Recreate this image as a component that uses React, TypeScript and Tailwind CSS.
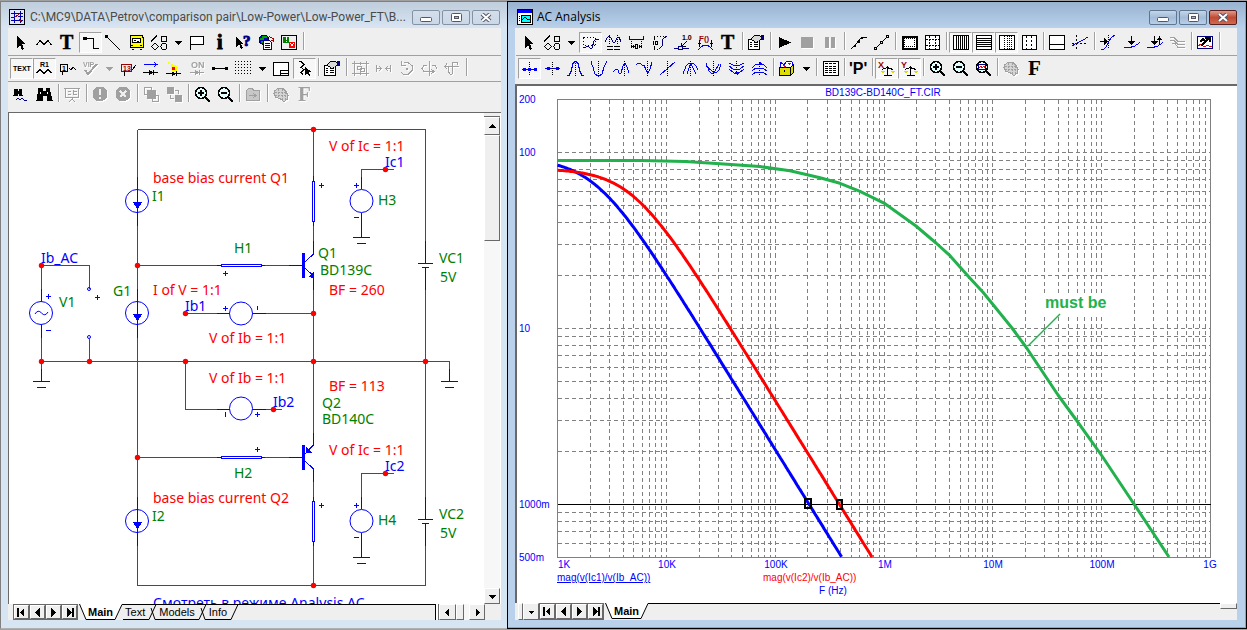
import type { ReactNode } from "react";

const serif = "font-['Liberation_Serif',serif] font-bold";
const sans = "font-['Liberation_Sans',sans-serif] font-bold";

// every icon is drawn on a 17x17 grid
const icons: Record<string, ReactNode> = {
  select: <path d="M4 2v12l3-3 2 5 2-1-2-5h4z" fill="#000" stroke="none" />,
  component: <path d="M0 10.5h1l3-4 4 4 4-4 3 4h1" />,
  text: (
    <text x="1" y="15" fontSize="20" fill="#000" stroke="#000" strokeWidth=".5" className={serif}>
      T
    </text>
  ),
  wire: (
    <>
      <path d="M1 3h4v3H1z" fill="#000" stroke="none" />
      <path d="M4 4.5h7.5v10H17" />
    </>
  ),
  diagonal: (
    <>
      <path d="M0 1h3v3H0z" fill="#000" stroke="none" />
      <path d="M2 3l13 13" />
    </>
  ),
  bus: (
    <>
      <path d="M3 1.5h11l1 2v10H2v-10z" fill="#ff0" />
      <path d="M4.5 4.5h8v4h-8z" fill="#fff" />
      <path d="M6 6.5h2M9 7.5h2M3 11.5h2M12 11.5h2M3.500 15.5h2M11.5 15.5h2" />
    </>
  ),
  shapes: (
    <>
      <path d="M0 7.5l6-6M10.5 2.5h5v5h-5zM4 9l3.5 3.5L4 16 .5 12.5z" />
      <circle cx="13" cy="12.5" r="3" />
    </>
  ),
  flag: <path d="M1.5 16V2.5h13v8h-13" fill="#fff" />,
  info: (
    <text x="5" y="15" fontSize="20" fill="#000" stroke="#000" className={serif}>
      i
    </text>
  ),
  help: (
    <>
      <path d="M1 3v10l3-3 2 5 2-1-2-4h3z" fill="#000" stroke="none" />
      <text x="8" y="12" fontSize="15" fill="#000080" stroke="#000080" className={serif}>
        ?
      </text>
    </>
  ),
  web: (
    <>
      <circle cx="6" cy="6" r="5" fill="#0000c0" stroke="#000" strokeDasharray="2 2" />
      <path d="M2 5h4M4 3h5M3 8h2" stroke="#00a000" strokeWidth="2" />
      <path d="M11 2.5l4 2v3M13 6h3" stroke="#900" />
      <path d="M5.5 6.5h6l2 2v7h-8z" fill="#fff" stroke="#000080" />
      <path d="M7 9.5h5M7 11.5h5M7 13.5h5" stroke="#000080" />
    </>
  ),
  errors: (
    <>
      <path d="M.5 1.5h15v14H.5z" />
      <circle cx="5" cy="6" r="3.5" fill="#008000" stroke="none" />
      <circle cx="11" cy="11" r="3.5" fill="#f00" stroke="none" />
      <path d="M5.5 3v3M5.5 7v1M9.5 9.5l3 3M12.5 9.5l-3 3" stroke="#fff" />
    </>
  ),
  attrText: (
    <text x="0" y="11" fontSize="7" fill="#000" stroke="none" className={sans}>
      TEXT
    </text>
  ),
  partNames: (
    <>
      <text x="4" y="7" fontSize="7" fill="#000" stroke="none" className={sans}>
        R1
      </text>
      <path d="M0 12.5h1l3-3 4 4 4-4 3 3h1" />
    </>
  ),
  nodes: (
    <>
      <path d="M1.5 4.5h7v7h-7zM3.5 11v4M10 8l2 2 2-3 3 3" />
      <text x="3" y="11" fontSize="7" fill="#000" stroke="none" className={sans}>
        1
      </text>
    </>
  ),
  vip: (
    <>
      <text x="1" y="7" fontSize="7" fill="#a0a0a0" stroke="none" className={sans}>
        VIP
      </text>
      <path d="M3 10l3 4 9-10" strokeWidth="2" />
    </>
  ),
  pins: (
    <>
      <path d="M1.5 4.5h10v7h-10z" stroke="#900" />
      <path d="M4.5 11v5M12 10l4-5" />
      <text x="3" y="11" fontSize="7" fill="#900" stroke="none" className={sans}>
        13
      </text>
    </>
  ),
  currents: (
    <>
      <path d="M1 4.5h12M11 2.5l3 2-3 2" stroke="#00f" />
      <path d="M0 12.5h15M6 10v5l3-2.5zM10.5 10v5" />
    </>
  ),
  power: (
    <>
      <path d="M2 2h2v2H2zM5 4h2v1h3l2 3-2 4H6L5 8z" fill="#ff0" stroke="none" />
      <path d="M6 7h3v3H6z" fill="#f00" stroke="none" />
      <path d="M0 13.5h15M6 12v4l3-2.5zM10.5 11v5" />
    </>
  ),
  conditions: (
    <>
      <text x="2" y="8" fontSize="9" fill="#a0a0a0" stroke="none" className={sans}>
        ON
      </text>
      <path d="M1 12.5h14M6 10v5l3-2.5zM10.5 10v5" />
    </>
  ),
  pinConnect: (
    <>
      <path d="M0 7h3v3H0zM13 7h3v3h-3z" fill="#000" stroke="none" />
      <path d="M3 8.5h10" />
    </>
  ),
  grid: <path d="M0 1.5h17M0 4.5h17M0 7.5h17M0 10.5h17M0 13.5h17" strokeDasharray="1 2" />,
  border: <path d="M.5 2.5h15v13H.5zM7.5 10.5h8v5h-8zM7.5 13.5h8" fill="#fff" />,
  mouse: (
    <>
      <path d="M3 1.5h2l3 3-3 3 3 2-3 3 2 2" />
      <path d="M9 7v8l2-2 2 3 1-1-1-3h3z" fill="#000" stroke="none" />
    </>
  ),
  properties: (
    <>
      <path d="M.5 5.5h11v10H.5z" fill="#fff" />
      <path d="M2 8.5h2M6 8.5h4M2 10.5h2M6 10.5h4M2 12.5h2M6 12.5h4" />
      <path d="M2.5 5.5l4-4h5l3 2-4 4-3 1-2-2z" fill="#d8d8d8" />
      <path d="M13 1h3v5h-3z" fill="#000080" stroke="none" />
    </>
  ),
  group: (
    <path d="M2.5 3.5h12v10h-12zM5.5 6.5h4v3h-4zM8.5 8.5h4v3h-4zM0 3.5h2M15 3.5h2M0 13.5h2M15 13.5h2M2.5 1v2M14.5 1v2M2.5 14v2M14.5 14v2M8.5 2v3M8.5 12v3" />
  ),
  mirror: <path d="M1.5 5v7M1 8.5h5M4 6l2.500 2.500L4 11M15.500 5v7M16 8.5h-5M13 6l-2.500 2.500L13 11" />,
  rotate: <path d="M6 2.5h4l4 3v5l-4 4H6l-3-2M3.500 1v4h4M8 8h1v1H8z" />,
  flipX: <path d="M8.5 1v15M6 5.5H3l-2 3 2 3h9M10 9l3 2.5-3 2.5M11 5.5h3l2 3" />,
  flipY: <path d="M1 6.5h14M3 3.500L1 6.5 3 9M8.500 14V3l2-1h3v3M4 7v4l2 3h2" />,
  find: (
    <>
      <path d="M2 3h2v2h2V3h2l1 6H6V7H4v2H1z" fill="#000" />
      <path d="M3 14l2-2 2 2 2-2 2 2h3" stroke="#000080" />
    </>
  ),
  findNext: (
    <>
      <path d="M3 2h3v3h4V2h3l3 12h-5V9H6v5H1z" fill="#000" />
      <path d="M4.500 6v2M11.500 6v2" stroke="#fff" />
    </>
  ),
  stepping: (
    <path d="M0 2.5h16M1.5 2.5v9h13v-9M8.5 11v3M5 15.5l3-2 3 2M4 5.5h3M9.5 4v5M9 5.5h4M4 8.5h3M9 8.5h4" />
  ),
  warn: (
    <>
      <circle cx="8" cy="8" r="7.5" fill="#a0a0a0" stroke="none" />
      <path d="M8 3v6M8 11v2" stroke="#efefef" strokeWidth="2" />
    </>
  ),
  stopError: (
    <>
      <circle cx="8" cy="8" r="7.5" fill="#a0a0a0" stroke="none" />
      <path d="M5 5l6 6M11 5l-6 6" stroke="#efefef" strokeWidth="2" />
    </>
  ),
  toFront: (
    <>
      <path d="M1.500 1.500h7v7h-7zM9.500 9.500h6v6h-6z" />
      <path d="M4 4h9v9H4z" fill="#a0a0a0" stroke="none" />
    </>
  ),
  toBack: (
    <>
      <path d="M1 1h7v7H1zM9 9h7v7H9z" fill="#a0a0a0" stroke="none" />
      <path d="M9 4.500h3.500V8M4.500 9v3.500H8" />
    </>
  ),
  zoomIn: (
    <>
      <circle cx="7" cy="7" r="5.5" fill="#e0ffff" strokeWidth="1.5" />
      <path d="M7 4v6M4 7h6M11 11l5 5" strokeWidth="2" />
    </>
  ),
  zoomOut: (
    <>
      <circle cx="7" cy="7" r="5.5" fill="#e0ffff" strokeWidth="1.5" />
      <path d="M4 7h6M11 11l5 5" strokeWidth="2" />
    </>
  ),
  zoomFit: (
    <>
      <circle cx="7" cy="7" r="5.5" fill="#e0ffff" strokeWidth="1.5" />
      <path d="M3.5 4.5h7v5h-7z" fill="#fff" stroke="#000080" />
      <path d="M4 8l2-2 1 2 2-2 1 2" stroke="#f00" />
      <path d="M11 11l5 5" strokeWidth="2" />
    </>
  ),
  folder: (
    <>
      <path d="M1.5 4.5l2-2h4l1 2h6v10h-13z" fill="#c8c8c8" />
      <path d="M4 9.5h6M8 7l3 2.5L8 12" />
    </>
  ),
  color: (
    <>
      <path d="M5 2.5h5l3 3 2 4-1 4-3 2-4-3-4-1-2-4 1-3z" fill="#d4d4d4" />
      <path d="M2 6.5h11M2 9.5h12M5.5 3v9M9.5 3v11M12.5 6v8" strokeDasharray="2 1" />
    </>
  ),
  fontDim: (
    <text x="2" y="15" fontSize="21" fill="#a0a0a0" stroke="none" className={serif}>
      F
    </text>
  ),
  font: (
    <text x="2" y="15" fontSize="21" fill="#000" stroke="none" className={serif}>
      F
    </text>
  ),
  scale: (
    <>
      <path d="M1.5 3.5h12v8h-12z" strokeDasharray="1 2" />
      <path d="M1 14l3-1 2-1 2 2h2l2-7 2-2h3" stroke="#000080" />
    </>
  ),
  cursors: (
    <>
      <path d="M0 8l2-4 2-2 2 2 2 4h2l2-4 2-1 2 5" stroke="#000080" />
      <path d="M4.5 1v9M12.5 1v9" strokeDasharray="1 1" />
      <path d="M2 12.5h6M9 12.5h6M2 15.5h6M9 15.5h6" />
    </>
  ),
  tagH: (
    <>
      <path d="M1 5.500h15M1.500 2v4M15.500 2v4" stroke="#000080" />
      <path d="M3.5 7v8M13.5 7v8" strokeDasharray="1 1" />
      <path d="M3 12.5h4M11 12.5h3M5.500 11v3M11.500 11v3M7.500 10.500h2v4h-2z" />
    </>
  ),
  tagV: (
    <>
      <path d="M3 2.5h11M3 15.5h6" strokeDasharray="1 2" />
      <path d="M8 15l3-3 1-7 4-3" stroke="#000080" />
      <path d="M3.5 3v3M3.5 12v3M2.500 7v4M4.500 7.5h2v3h-2z" />
    </>
  ),
  tagPoint: (
    <>
      <text x="8" y="6" fontSize="7" fill="#000" stroke="none" className={sans}>
        1.0
      </text>
      <path d="M13 7l-5 5M7.500 9v3.500h4" />
      <path d="M0 14.5h4M4.500 12.5h4v3h-4zM9 14.5h6" stroke="#000080" />
    </>
  ),
  perf: (
    <>
      <text x="2" y="7" fontSize="8" fill="#900" stroke="none" className={sans}>
        F()
      </text>
      <path d="M1 16l3-3 3-2h3l3 2 3 3" stroke="#00f" />
      <path d="M2.5 6v7M1 9.500h3M14.5 6v7M13 9.500h3" />
    </>
  ),
  run: <path d="M3 3v11l12-5.5z" fill="#000" stroke="none" />,
  stop: <path d="M2 3h12v11H2z" fill="#a0a0a0" stroke="none" />,
  pause: <path d="M3 3h4v11H3zM9 3h4v11H9z" fill="#a0a0a0" stroke="none" />,
  dataPoints: (
    <>
      <path d="M1 15l5-5 5-6 2-1h4" />
      <path d="M4 11h2v2H4zM8 7h2v2H8zM11 3h2v2h-2z" fill="#000" stroke="none" />
    </>
  ),
  tokens: <path d="M1.500 13.500h2v2h-2zM7.500 7.500h2v2h-2zM13.500 1.500h2v2h-2zM4 13l3-3M10 7l3-3" />,
  ruler: (
    <>
      <path d="M1.5 2.5h14v12h-14z" strokeWidth="2" fill="#fff" />
      <path d="M3 4.5h11M3 12.5h11M3.5 4v9M13.5 4v9" strokeDasharray="1 1" />
    </>
  ),
  plus: (
    <>
      <path d="M1.5 1.5h14v14h-14z" fill="#fff" />
      <path d="M2 5.5h13M2 11.5h13M5.5 2v13M11.5 2v13" strokeDasharray="2 1" />
    </>
  ),
  gridX: (
    <path d="M1.5 1.5h15v14h-15zM4.5 2v13M6.5 2v13M8.5 2v13M10.5 2v13M12.5 2v13M14.5 2v13" fill="#fff" />
  ),
  gridY: (
    <path d="M1.5 1.5h15v14h-15zM2 4.5h14M2 6.5h14M2 8.5h14M2 10.5h14M2 12.5h14" fill="#fff" />
  ),
  minorX: (
    <>
      <path d="M1.5 1.5h15v14h-15z" fill="#fff" />
      <path d="M6.5 2v13M9.5 2v13M11.5 2v13M13.5 2v13" strokeDasharray="1 1" />
    </>
  ),
  minorY: (
    <>
      <path d="M1.5 1.5h14v14h-14z" fill="#fff" />
      <path d="M5.5 2v13M10.5 2v13" strokeDasharray="2 2" />
    </>
  ),
  baseline: <path d="M.5 1.5h15v14H.5zM1 10.5h14" fill="#fff" />,
  horizontal: (
    <>
      <path d="M4.5 1v15M0 9.5h15" strokeDasharray="2 2" />
      <path d="M0 12l5-3 6-3 5-3" stroke="#00f" />
    </>
  ),
  goX: (
    <>
      <path d="M1 15h3l2-2 3-6 2-3 4-3" stroke="#00f" />
      <path d="M0 7.5h6" />
      <path d="M4 4v7l4-3.500z" fill="#000" stroke="none" />
      <path d="M8.5 1v14" strokeDasharray="1 1" />
    </>
  ),
  goY: (
    <>
      <path d="M1 13.5h5l5-1 3-2 3-2" stroke="#00f" />
      <path d="M8.5 2v7" />
      <path d="M5 7h7l-3.500 4z" fill="#000" stroke="none" />
    </>
  ),
  goPerf: (
    <>
      <path d="M1 13.5h5l5-1 3-2 3-2" stroke="#00f" />
      <path d="M8.5 2v7M13.5 2v9" />
      <path d="M5 7h7l-3.500 4zM11 6h5l-2.500-3z" fill="#000" stroke="none" />
    </>
  ),
  branch: <path d="M1 3.5h4l4 4h7M1 6.5h4l4 4h7M3 9.5h3l3 4h7" />,
  monte: (
    <>
      <path d="M.5 2.5h15v12H.5z" fill="#fff" stroke="#000080" />
      <path d="M1 12l3-2 3 3 4-2 2 2 2-1" stroke="#f00" />
      <path d="M3 8l3-3 2 2M4 12l8-8M8 4h5v4" strokeWidth="1.500" />
    </>
  ),
  next: (
    <>
      <path d="M1 9.5h15" stroke="#00f" />
      <path d="M2 8h3v3H2zM7 8h3v3H7zM13 8h3v3h-3z" fill="#00f" stroke="none" />
      <path d="M8.5 2v14" strokeDasharray="1 1" />
    </>
  ),
  interpolate: (
    <>
      <path d="M1 8.5h15" stroke="#00f" />
      <path d="M3 7h3v3H3zM12 7h3v3h-3z" fill="#00f" stroke="none" />
      <path d="M8.5 2v14" strokeDasharray="1 1" />
    </>
  ),
  peak: (
    <>
      <path d="M0 15.5h2l2-4 2-8 2-2h1l2 2 2 8 2 4h2" stroke="#00f" />
      <path d="M8.5 1v15" strokeDasharray="1 1" />
    </>
  ),
  valley: (
    <>
      <path d="M1 1v2l2 4 2 7 3 2h1l3-2 2-7 2-4V1" stroke="#00f" />
      <path d="M8.5 1v15" strokeDasharray="1 1" />
    </>
  ),
  high: (
    <>
      <path d="M0 12l3-3 2 1 1 3h2l2-7 2-3 2 4 2 6" stroke="#00f" />
      <path d="M11.5 1v15" strokeDasharray="1 1" />
    </>
  ),
  low: (
    <>
      <path d="M0 5l2-2h2l2 2h2l2 5 2 3 2-4 2-7" stroke="#00f" />
      <path d="M11.5 1v15" strokeDasharray="1 1" />
    </>
  ),
  inflection: (
    <>
      <path d="M1 15L16 2" stroke="#00f" />
      <path d="M8.5 1v15" strokeDasharray="1 1" />
    </>
  ),
  globalHigh: (
    <>
      <path d="M1 14l3-8 3-3 3 3 4 8M5 14l3-9 3-2 3 3 2 4" stroke="#00f" />
      <path d="M8.5 1v15" strokeDasharray="1 1" />
    </>
  ),
  globalLow: (
    <>
      <path d="M1 3l3 8 3 3 3-3 4-7M1 6l6 5 4 2 3-3 2-6" stroke="#00f" />
      <path d="M8.5 1v15" strokeDasharray="1 1" />
    </>
  ),
  bottom: (
    <>
      <path d="M1 3l4 2h7l4-2M1 6l4 3h7l4-3M1 9l5 4h5l5-4" stroke="#00f" />
      <path d="M6 12h6l-3 3z" fill="#00f" stroke="none" />
      <path d="M8.5 1v14" strokeDasharray="1 1" />
    </>
  ),
  top: (
    <>
      <path d="M1 15l4-3h7l4 3M1 11l4-3h7l4 3M1 8l4-4h7l4 4" stroke="#00f" />
      <path d="M6 5h6L9 2z" fill="#00f" stroke="none" />
      <path d="M8.5 2v14" strokeDasharray="1 1" />
    </>
  ),
  animate: (
    <>
      <path d="M1 2l4 3 3-4 5 1v5H1z" fill="#fff" stroke="#00f" />
      <path d="M9 3h3M10 5l2-2M4 5l3 2" stroke="#f00" />
      <path d="M.5 7.5h11v8H.5zM11.5 7.5l3-3v8l-3 3z" fill="#dd0" />
      <path d="M5.500 10v2" />
    </>
  ),
  numeric: (
    <>
      <path d="M1.5 1.5h15v14h-15z" fill="#fff" />
      <path d="M3 3.5h12M3 6.5h12M3 8.5h12M3 10.5h12M3 12.5h12" strokeDasharray="3 1" />
    </>
  ),
  probe: (
    <text x="-1" y="14" fontSize="16" fill="#000" stroke="none" className={sans}>
      'P'
    </text>
  ),
  balanceX: (
    <>
      <text x="0" y="8" fontSize="9" fill="#900" stroke="none" className={sans}>
        X
      </text>
      <path d="M9.500 6v9M6 15.5h8M4 9.500l5-2 6 2" />
      <path d="M2 11h5l-2 3zM12 11h5l-2 3z" fill="#dd0" stroke="none" />
    </>
  ),
  balanceY: (
    <>
      <text x="0" y="8" fontSize="9" fill="#900" stroke="none" className={sans}>
        Y
      </text>
      <path d="M9.500 6v9M6 15.5h8M4 9.500l5-2 6 2" />
      <path d="M2 11h5l-2 3zM12 11h5l-2 3z" fill="#dd0" stroke="none" />
    </>
  ),
};

const disabled = [
  "vip", "conditions", "group", "mirror", "rotate", "flipX", "flipY", "stepping", "warn", "stopError",
  "toFront", "toBack", "folder", "color", "fontDim", "stop", "pause", "branch",
];
const pressed = [
  "wire", "attrText", "partNames", "mouse", "scale", "gridX", "gridY", "minorX", "next", "balanceX", "balanceY",
];

const editBar =
  "select component text wire diagonal bus shapes v flag info help web errors |";
const viewBar =
  "attrText partNames nodes vip V pins currents power conditions pinConnect grid v border mouse | properties | group mirror rotate flipX flipY |";
const findBar =
  "find findNext | stepping | warn stopError | toFront toBack | zoomIn zoomOut | folder | color fontDim";
const analysisBar =
  "select shapes v scale cursors tagH tagV tagPoint perf text | properties | run stop pause | dataPoints tokens | ruler plus | gridX gridY minorX minorY | baseline horizontal | goX goY goPerf branch | monte |";
const cursorBar =
  "next interpolate peak valley high low inflection globalHigh globalLow bottom top | animate v | numeric | probe | balanceX balanceY | zoomIn zoomOut zoomFit | color font";

function Toolbar({ items }: { items: string }) {
  return (
    <div className="flex pl-0.5">
      {items.split(" ").map((name, i) => {
        if (name === "|") {
          return (
            <div key={i} className="w-[5px] h-[18px] pl-0.5">
              <div className="w-0.5 h-full bg-[#a0a0a0] border-r border-white" />
            </div>
          );
        }

        if (name === "v" || name === "V") {
          return (
            <button
              key={i}
              aria-label="More"
              className={
                "w-[15px] h-[21px] flex items-center justify-center " +
                (name === "V" ? "text-[#a0a0a0]" : "text-black")
              }
            >
              <svg width="7" height="4" fill="currentColor" shapeRendering="crispEdges">
                <path d="M0 0h7L3.5 4z" />
              </svg>
            </button>
          );
        }

        const off = disabled.includes(name);

        return (
          <button
            key={i}
            aria-label={name}
            disabled={off}
            className={
              "w-[23px] h-[21px] shrink-0 border flex items-center justify-center " +
              (pressed.includes(name)
                ? "bg-[#f7f7f7] border-t-[#a0a0a0] border-l-[#a0a0a0] border-r-white border-b-white"
                : "border-transparent")
            }
          >
            <svg
              width="17"
              height="17"
              viewBox="0 0 17 17"
              fill="none"
              stroke={off ? "#a0a0a0" : "#000"}
              shapeRendering="crispEdges"
              className={off ? "drop-shadow-[1px_1px_0_#fff] overflow-visible" : "overflow-visible"}
            >
              {icons[name]}
            </svg>
          </button>
        );
      })}
    </div>
  );
}

function WindowButtons({ active }: { active?: boolean }) {
  const base = "w-7 h-[15px] border rounded-xs flex items-center justify-center ";
  const normal = active
    ? "border-[#5f7690] bg-linear-to-b from-[#c4d6e9] via-[#a3bcd8] to-[#b8cfe8]"
    : "border-[#8492a3] bg-linear-to-b from-[#d3deea] to-[#cbd8e7]";

  return (
    <div className="flex gap-0.5">
      <button aria-label="Minimize" className={base + normal}>
        <svg width="12" height="9" fill="#fff" stroke="#535666">
          <rect x=".5" y="4.5" width="11" height="4" rx="1" />
        </svg>
      </button>
      <button aria-label="Restore" className={base + normal}>
        <svg width="11" height="9" fill="#fff" stroke="#535666">
          <rect x=".5" y=".5" width="10" height="8" rx="1" />
          <rect x="3.5" y="3.5" width="4" height="2" fill="#a3bcd8" />
        </svg>
      </button>
      <button
        aria-label="Close"
        className={
          base + (active ? "border-[#5b1f1c] bg-linear-to-b from-[#dd9a8c] via-[#c04a33] to-[#cf6a50]" : normal)
        }
      >
        <svg width="12" height="9" fill="none">
          <path d="M2 1l8 7M10 1L2 8" stroke="#535666" strokeWidth="4" />
          <path d="M2 1l8 7M10 1L2 8" stroke="#fff" strokeWidth="2" />
        </svg>
      </button>
    </div>
  );
}

const box =
  "bg-[#efefef] border border-t-white border-l-white border-r-[#696969] border-b-[#696969] flex items-center justify-center shrink-0 ";

function Arrow({ label, d, className }: { label: string; d: string; className: string }) {
  return (
    <button aria-label={label} className={box + className}>
      <svg width="9" height="9" viewBox="0 0 9 9" shapeRendering="crispEdges">
        <path d={d} />
      </svg>
    </button>
  );
}

function SheetNav() {
  return (
    <div className="flex bg-[#696969] gap-px p-px">
      <Arrow label="First sheet" className="w-[15px]" d="M0 0h2v9H0zM7 0v9L2.500 4.500z" />
      <Arrow label="Previous sheet" className="w-[15px]" d="M7 0v9L2 4.500z" />
      <Arrow label="Next sheet" className="w-[15px]" d="M2 0v9l5-4.500z" />
      <Arrow label="Last sheet" className="w-[15px]" d="M2 0v9l4.500-4.500zM7 0h2v9H7z" />
    </div>
  );
}

// slanted edge between two sheet tabs
function Slant({ d, fillPath }: { d: string; fillPath?: string }) {
  return (
    <svg width="10" height="16" className="shrink-0" fill="none" stroke="#000">
      {fillPath && <path d={fillPath} fill="#fff" stroke="none" />}
      <path d={d} />
    </svg>
  );
}

type P = [number, number];

function Schematic() {
  const dots: P[] = [
    [313.5, 129.5], [385.5, 169.5], [41.5, 265.5], [137.5, 265.5], [185.5, 313.5], [313.5, 313.5],
    [41.5, 361.5], [89.5, 361.5], [185.5, 361.5], [313.5, 361.5], [425.5, 361.5], [273.5, 409.5],
    [137.5, 457.5], [385.5, 473.5], [313.5, 585.5],
  ];
  const circles: P[] = [
    [137, 201], [137, 313], [137, 521], [41, 313], [241, 313.5], [241, 408.5], [361.5, 201], [361.5, 521],
  ];
  const plus: P[] = [
    [48.5, 296.5], [97.5, 297.5], [225.5, 273.5], [225.5, 308.5], [321.5, 185.5], [356.5, 185.5],
    [257.5, 414.5], [257.5, 449.5], [321.5, 505.5], [356.5, 505.5],
  ];
  const names: [number, number, string][] = [
    [152, 201, "I1"], [59, 307, "V1"], [113, 296, "G1"], [234, 253, "H1"], [378, 205, "H3"],
    [318, 258, "Q1"], [320, 275, "BD139C"], [439, 263, "VC1"], [440, 282, "5V"], [234, 478, "H2"],
    [152, 521, "I2"], [322, 408, "Q2"], [322, 424, "BD140C"], [378, 525, "H4"], [439, 519, "VC2"],
    [440, 538, "5V"],
  ];
  const notes: [number, number, string][] = [
    [153, 183, "base bias current Q1"], [329, 151, "V of Ic = 1:1"], [153, 295, "I of V = 1:1"],
    [209, 343, "V of Ib = 1:1"], [329, 295, "BF = 260"], [209, 383, "V of Ib = 1:1"],
    [329, 391, "BF = 113"], [329, 455, "V of Ic = 1:1"], [153, 503, "base bias current Q2"],
  ];
  const nets: [number, number, string][] = [
    [41, 263, "Ib_AC"], [185, 311, "Ib1"], [385, 167, "Ic1"], [273, 407, "Ib2"], [385, 471, "Ic2"],
    [153, 608, "Смотреть в режиме Analysis AC"],
  ];

  return (
    <svg
      viewBox="9 113 475 491"
      preserveAspectRatio="xMinYMin meet"
      className="absolute inset-0 w-full h-full font-['Noto_Sans',sans-serif] text-[14px]"
      role="img"
      aria-label="Schematic"
    >
      <g fill="none" shapeRendering="crispEdges">
        <path
          stroke="#008000"
          d="M137.5 129.500H425.500V585.500H137.500V129.500M137 265.500H289M137 457.500H289M41.500 361V265.500H89.500V289M89.500 339V362M41 361.500H449.500V369M41.500 361V369M185 313.500H313M185.500 361V409.500H282M313.500 129V586M361.500 177V169.500H394M361.500 497V473.500H394"
        />
        <path
          stroke="#fff"
          strokeWidth="3"
          d="M137.500 190V212M137.500 302V324M137.500 510V532M41.500 302V325M230 313.500H252M230 409.500H252M313.500 182V221M313.500 502V541M222 265.500H261M222 457.500H261M313.500 255V276M313.500 446V468M425.500 264V267M425.500 520V523"
        />
        <path
          stroke="#00f"
          d="M137.500 177V226M137.500 289V338M137.500 497V546M41.500 289V301M41.500 325V338M217 313.500H229M253 313.500H266M217 409.500H229M253 409.500H266M217 265.500H221M262 265.500H265M217 457.500H221M262 457.500H265M221.500 264.500H261.500V266.500H221.500ZM221.500 456.500H261.500V458.500H221.500ZM313.500 176V181M313.500 222V226M312.500 181.500H314.500V221.500H312.500ZM313.500 497V501M313.500 542V546M312.500 501.500H314.500V541.500H312.500ZM289 265.500H302M289 457.500H302M313.500 241V254L305 262M305 268L313.500 276V290M313.500 433V445L305 454M305 461L313.500 469V482M361.500 177V189M361.500 213V237M353 237.500H370M357 243.500H366M361.500 497V509M361.500 533V557M353 557.500H370M357 563.500H366M425.500 241V263M418 263.500H433M422 267.500H429M425.500 267V290M425.500 497V519M418 519.500H433M422 523.500H429M425.500 523V546M41.500 369V381M33 381.500H50M37 387.500H46M449.500 369V381M441 381.500H458M445 387.500H454M46 330.500H51M354 217.500H359M354 537.500H359M257.500 306V310M225.500 412V417"
        />
        <path
          stroke="none"
          fill="#00f"
          d="M133 202H142L137.500 210ZM133 314H142L137.500 322ZM133 522H142L137.500 530ZM302 253H305V278H302ZM302 445H305V470H302ZM314 271V278L308 277ZM306 447V453H312Z"
        />
        {plus.map(([x, y]) => (
          <path key={x + "," + y} stroke="#00f" d={`M${x - 2.5} ${y}h5M${x} ${y - 2.5}v5`} />
        ))}
      </g>
      <g fill="none" stroke="#00f">
        {circles.map(([x, y]) => (
          <circle key={x + "," + y} cx={x} cy={y} r="11.500" />
        ))}
        <circle cx="89" cy="289" r="1.500" />
        <circle cx="89" cy="337" r="1.500" />
        <path d="M35 314q3-5 6.500-1t6.500-1" />
      </g>
      {dots.map(([x, y]) => (
        <circle key={x + "," + y} cx={x} cy={y} r="2.700" fill="#f00" />
      ))}
      <g fill="#008000">
        {names.map(([x, y, t]) => (
          <text key={t + y} x={x} y={y}>{t}</text>
        ))}
      </g>
      <g fill="#f00">
        {notes.map(([x, y, t]) => (
          <text key={t + y} x={x} y={y}>{t}</text>
        ))}
      </g>
      <g fill="#00f">
        {nets.map(([x, y, t]) => (
          <text key={t} x={x} y={y}>{t}</text>
        ))}
      </g>
    </svg>
  );
}

const left = 557.5;
const right = 1210.5;
const topY = 99.5;
const bottomY = 557.5;
const xAt = (f: number) => left + ((right - left) / 6) * (Math.log10(f) - 3);
const yAt = (g: number) => bottomY - 176 * Math.log10(g / 0.5);

// single pole roll-off sampled across the sweep
function rollOff(gain: number, pole: number) {
  const points: string[] = [];

  for (let e = 3; e < 6.2; e += 0.01) {
    const f = 10 ** e;
    const g = gain / Math.sqrt(1 + (f / pole) ** 2);
    if (g < 0.495) break;
    points.push(`${xAt(f).toFixed(1)},${yAt(g).toFixed(1)}`);
  }

  return points.join(" ");
}

function Plot() {
  const cols: number[] = [];
  for (let d = 3; d < 9; d++) {
    for (let n = 1; n < 10; n++) cols.push(n * 10 ** d);
  }
  const rows = [0.6, 0.7, 0.8, 0.9];
  for (let n = 2; n <= 10; n++) rows.push(n);
  for (let n = 2; n <= 10; n++) rows.push(n * 10);

  const xLabels: [string, number][] = [
    ["1K", 564], ["10K", 667], ["100K", 776], ["1M", 885], ["10M", 993], ["100M", 1102], ["1G", 1210],
  ];
  const yLabels: [string, number][] = [
    ["200", 103], ["100", 156], ["10", 332], ["1000m", 508], ["500m", 561],
  ];

  return (
    <svg
      viewBox="517 86 720 517"
      preserveAspectRatio="xMinYMin meet"
      className="absolute inset-0 w-full h-full font-['Liberation_Sans',sans-serif] text-[10px]"
      role="img"
      aria-label="AC analysis plot"
    >
      <g stroke="#808080" fill="none" shapeRendering="crispEdges">
        {cols.slice(1).map((f) => (
          <path key={f} d={`M${Math.round(xAt(f) - 0.5) + 0.5} ${topY}V${bottomY}`} strokeDasharray="4 3" />
        ))}
        {rows.map((g) => (
          <path key={g} d={`M${left} ${Math.round(yAt(g) - 0.5) + 0.5}H${right}`} strokeDasharray="4 3" />
        ))}
        <path d={`M${left} ${topY}H${right}V${bottomY}H${left}Z`} />
        <path d={`M${left} 504.5H${right}`} stroke="#000" />
      </g>
      <g fill="none" strokeWidth="3" strokeLinejoin="round">
        <polyline points={rollOff(93, 2210)} stroke="#00f" />
        <polyline points={rollOff(81, 4820)} stroke="#f00" />
        <path
          stroke="#22b14c"
          d="M557 160.500L641 160.600L685 161.500L720 163.700L760 166.600L790 170.700L820 177.700L840 183.300L860 191.300L885 203.700L916 226L936 243L950 255.700L968 276L983 292.300L1012 328L1026 347L1058 395L1077 421L1102 456L1134 504L1169 557"
        />
      </g>
      <path d="M1043 293h65v21h-65z" fill="#fff" />
      <path d="M1028 346L1060 314" stroke="#22b14c" strokeWidth="1.500" />
      <text x="1045" y="308" fill="#22b14c" className="text-[16px] font-bold">
        must be
      </text>
      <g fill="none" stroke="#000" strokeWidth="2" shapeRendering="crispEdges">
        <path d="M805 499h6v9h-6zM837 500h5v9h-5z" />
      </g>
      <g fill="#00f">
        <text x="883" y="96" textAnchor="middle">BD139C-BD140C_FT.CIR</text>
        {xLabels.map(([t, x]) => (
          <text key={t} x={x} y="568" textAnchor="middle">{t}</text>
        ))}
        {yLabels.map(([t, y]) => (
          <text key={t} x="519" y={y}>{t}</text>
        ))}
        <text x="557" y="581" className="underline">mag(v(Ic1)/v(Ib_AC))</text>
        <text x="819" y="594">F (Hz)</text>
      </g>
      <text x="763" y="581" fill="#f00">mag(v(Ic2)/v(Ib_AC))</text>
    </svg>
  );
}

function SchematicWindow() {
  return (
    <section className="min-w-0 flex flex-col border-l border-t border-b border-[#808080] border-b-[#b0b0b0] bg-[#d7e4f2] pl-[7px] pr-1.5 pb-2">
      <header className="h-[26px] shrink-0 -ml-[7px] -mr-1.5 pl-2 pr-[7px] pt-1 flex items-center bg-linear-to-b from-[#bfcddc] to-[#d9e5f2]">
        <svg width="16" height="16" shapeRendering="crispEdges" fill="none" className="shrink-0">
          <path d="M.5.5h15v15H.5z" fill="#dfe8ff" stroke="#000" />
          <path d="M2 4.500h12M5.500 2v12M11.500 2v12M2 11.500h12M2 8.500h4M9 7.500h5" stroke="#00a" />
          <path d="M5 9l5-4M10 10l3 3" stroke="#a00" />
        </svg>
        <h1 className="flex-1 min-w-0 ml-[5px] truncate text-[12px] text-[#4a4a4a] font-['Roboto',sans-serif]">
          C:\MC9\DATA\Petrov\comparison pair\Low-Power\Low-Power_FT\B...
        </h1>
        <WindowButtons />
      </header>

      <div className="shrink-0 bg-[#efefef]">
        <div className="h-7 pt-1 border-b border-[#a0a0a0]">
          <Toolbar items={editBar} />
        </div>
        <div className="h-[26px] pt-0.5 border-b border-[#a0a0a0]">
          <Toolbar items={viewBar} />
        </div>
        <div className="h-[30px] pt-0.5">
          <Toolbar items={findBar} />
        </div>
      </div>

      <div className="flex-1 min-h-0 flex border-l border-t border-[#696969] bg-white pr-px">
        <div className="flex-1 min-w-0 relative overflow-hidden">
          <Schematic />
        </div>
        <div className="w-4 flex flex-col bg-[#f7f7f7]">
          <div className="h-1 border-b border-[#696969] bg-[#efefef]" />
          <Arrow label="Scroll up" className="h-[18px]" d="M4.500 2L8 6H1z" />
          <div className={box + "h-[106px]"} />
          <div className="flex-1" />
          <Arrow label="Scroll down" className="h-4" d="M1 3h7L4.500 7z" />
        </div>
      </div>

      <footer className="h-4 shrink-0 flex bg-[#efefef] pl-[5px] text-[11px] leading-4 font-['Liberation_Sans',sans-serif]">
        <SheetNav />
        <Slant d="M1.500 0L8 15.500H10" fillPath="M1.500 0L8 15.500H10V0z" />
        <button className="font-bold bg-white border-b border-black">Main</button>
        <Slant d="M0 15.500H2L9 .5H10" fillPath="M0 0H9L2 15.500H0z" />
        <button className="px-0.5 border-y border-black leading-[14px]">Text</button>
        <Slant d="M0 15.500H2L9 .5M0 .5H10M4 4L8 15.500H10" />
        <button className="px-0.5 border-y border-black leading-[14px]">Models</button>
        <Slant d="M0 15.500H2L9 .5M0 .5H10M4 4L8 15.500H10" />
        <button className="px-0.5 border-y border-black leading-[14px]">Info</button>
        <Slant d="M0 15.500H2L9 .5M0 .5H10" />
        <div className="flex-1 border-t border-r border-black" />
        <div className="w-[3px] bg-white border-r border-[#696969]" />
        <Arrow label="Scroll left" className="w-[17px]" d="M6 1v7L2 4.500z" />
        <div className={box + "w-2"} />
        <div className="w-[5px] bg-[#f7f7f7]" />
        <Arrow label="Scroll right" className="w-4" d="M3 1v7l4-3.500z" />
        <div className="w-4" />
      </footer>
    </section>
  );
}

function AnalysisWindow() {
  return (
    <section className="min-w-0 flex flex-col border border-black">
      <div className="flex-1 min-h-0 flex flex-col border-r border-b border-[#38c8e0] bg-[#b9d1ea] pl-[7px] pr-2 pb-[7px]">
        <header className="h-[26px] shrink-0 -ml-[7px] -mr-2 pl-[9px] pr-2 pt-1 flex items-center bg-linear-to-b from-[#98b3d1] to-[#b9d1ea]">
          <svg width="16" height="16" shapeRendering="crispEdges" fill="none" className="shrink-0">
            <path d="M.5.5h15v15H.5z" fill="#fff" stroke="#000" />
            <path d="M1 1h14v3H1z" fill="#00f" />
            <path d="M4.500 6.500h9v7h-9z" fill="#0ff" stroke="#000" />
            <path d="M5 11l3-3 2 2h3M2 7.500h1M2 9.500h1M2 11.500h1" stroke="#000" />
          </svg>
          <h1 className="flex-1 min-w-0 ml-1 truncate text-[12px] text-black">AC Analysis</h1>
          <WindowButtons active />
        </header>

        <div className="shrink-0 bg-[#efefef] pl-px">
          <div className="h-7 pt-1 border-b border-[#a0a0a0]">
            <Toolbar items={analysisBar} />
          </div>
          <div className="h-7 pt-0.5">
            <Toolbar items={cursorBar} />
          </div>
        </div>

        <div className="flex-1 min-h-0 border-l-2 border-t-2 border-[#696969] bg-white relative overflow-hidden">
          <Plot />
        </div>

        <footer className="h-[17px] shrink-0 flex bg-[#efefef] pl-[3px] text-[11px] leading-4 font-['Liberation_Sans',sans-serif]">
          <div className={box + "w-[5px]"} />
          <Arrow label="Sheet list" className="w-4" d="M2 4h5L4.500 7z" />
          <SheetNav />
          <Slant d="M1.500 0L8 15.500H10" fillPath="M1.500 0L8 15.500H10V0z" />
          <button className="font-bold bg-white border-b border-black h-4">Main</button>
          <Slant d="M0 15.500H2L9 .5H10" fillPath="M0 0H9L2 15.500H0z" />
          <div className="flex-1 border-t border-black" />
          <div className={box + "w-[17px] h-1.5"} />
        </footer>
      </div>
    </section>
  );
}

export default function App() {
  return (
    <main className="grid grid-cols-[507fr_740fr] h-screen py-px bg-[#a0a0a0] font-['Open_Sans',sans-serif]">
      <SchematicWindow />
      <AnalysisWindow />
    </main>
  );
}
